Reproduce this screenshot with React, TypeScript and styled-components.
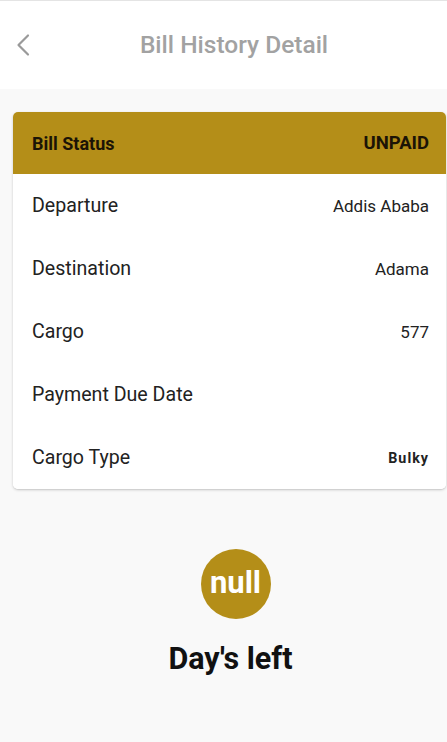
import React from "react";
import styled, { createGlobalStyle } from "styled-components";

const Global = createGlobalStyle`
  html, body { margin: 0; padding: 0; background: #f9f9f9; }
  body { font-family: Roboto, "Noto Sans", sans-serif; }
  * { box-sizing: border-box; }
`;

const Page = styled.div`
  width: 447px;
  min-height: 742px;
  background: #f9f9f9;
  display: flex;
  flex-direction: column;
`;

const TopBar = styled.header`
  height: 89px;
  background: #ffffff;
  border-top: 1px solid #e4e4e4;
  display: grid;
  grid-template-columns: 60px 1fr 60px;
  align-items: center;
`;

const BackButton = styled.button`
  border: none;
  background: none;
  padding: 0 0 0 15px;
  height: 40px;
  display: flex;
  align-items: center;
  cursor: pointer;
  color: #9a9a9a;
`;

const Title = styled.h1`
  margin: 0 0 2px 0;
  padding-left: 21px;
  text-align: center;
  font-size: 24.5px;
  font-weight: 500;
  color: #a2a2a2;
  white-space: nowrap;
`;

const Main = styled.main`
  padding: 23px 1px 0 13px;
  display: flex;
  flex-direction: column;
`;

const Card = styled.section`
  background: #ffffff;
  border-radius: 5px;
  box-shadow: 0 1px 3px rgba(0, 0, 0, 0.18), 0 1px 1px rgba(0, 0, 0, 0.06);
  overflow: hidden;
`;

const Row = styled.div<{ $header?: boolean }>`
  height: ${(p) => (p.$header ? "62px" : "63px")};
  padding: 0 17px 0 19px;
  display: flex;
  align-items: center;
  justify-content: space-between;
  background: ${(p) => (p.$header ? "#b48e18" : "#ffffff")};
  color: ${(p) => (p.$header ? "#1b1406" : "#222222")};
  font-size: ${(p) => (p.$header ? "18px" : "19.6px")};
  font-weight: ${(p) => (p.$header ? 700 : 400)};
`;

const Value = styled.span<{ $strong?: boolean }>`
  font-size: ${(p) => (p.$strong ? "14.3px" : "17px")};
  font-weight: ${(p) => (p.$strong ? 700 : 400)};
  letter-spacing: ${(p) => (p.$strong ? "1px" : "0")};
  color: #222222;
`;

const HeaderValue = styled.span`
  font-size: 18.5px;
  font-weight: 700;
`;

const Countdown = styled.div`
  margin-top: 60px;
  display: flex;
  flex-direction: column;
  align-items: center;
  gap: 22px;
`;

const Circle = styled.div`
  width: 70px;
  height: 70px;
  border-radius: 50%;
  background: #b48e18;
  color: #ffffff;
  display: flex;
  align-items: center;
  justify-content: center;
  font-size: 31px;
  font-weight: 700;
  margin-left: 12px;
  padding-bottom: 3px;
`;

const DaysLeft = styled.div`
  font-size: 30.5px;
  font-weight: 700;
  color: #111111;
  margin-left: 2px;
`;

const rows: { label: string; value: string; strong?: boolean }[] = [
  { label: "Departure", value: "Addis Ababa" },
  { label: "Destination", value: "Adama" },
  { label: "Cargo", value: "577" },
  { label: "Payment Due Date", value: "" },
  { label: "Cargo Type", value: "Bulky", strong: true },
];

export default function App() {
  return (
    <Page>
      <Global />
      <TopBar>
        <BackButton aria-label="Back">
          <svg width="16" height="24" viewBox="0 0 16 24" fill="none">
            <path d="M13 2.5 L3.5 12 L13 21.5" stroke="#9a9a9a" strokeWidth="2.2" strokeLinecap="round" strokeLinejoin="round" />
          </svg>
        </BackButton>
        <Title>Bill History Detail</Title>
        <div />
      </TopBar>
      <Main>
        <Card>
          <Row $header>
            <span>Bill Status</span>
            <HeaderValue>UNPAID</HeaderValue>
          </Row>
          {rows.map((r) => (
            <Row key={r.label}>
              <span>{r.label}</span>
              <Value $strong={r.strong}>{r.value}</Value>
            </Row>
          ))}
        </Card>
        <Countdown>
          <Circle>null</Circle>
          <DaysLeft>Day's left</DaysLeft>
        </Countdown>
      </Main>
    </Page>
  );
}
